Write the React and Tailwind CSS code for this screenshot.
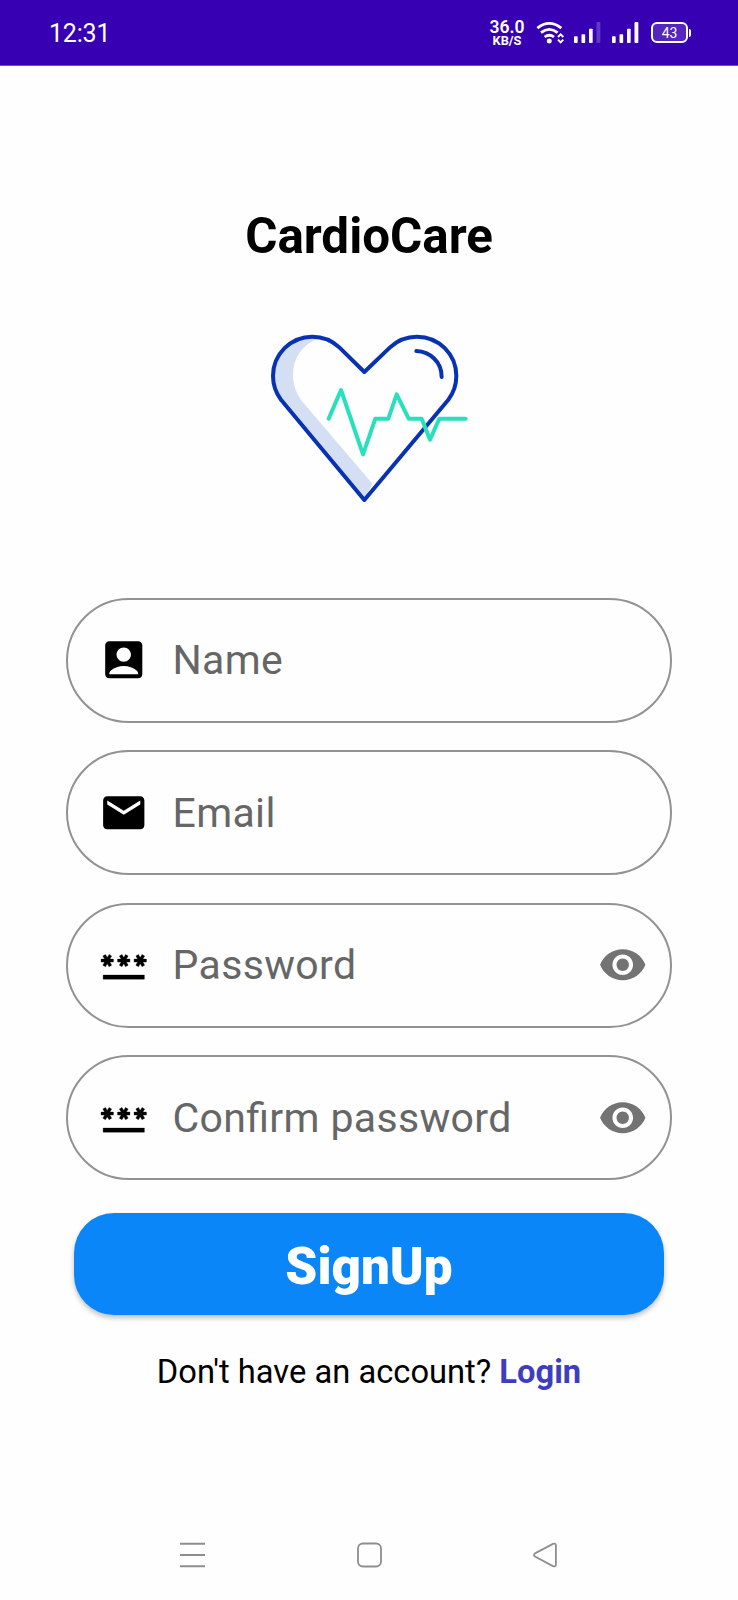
const ICONS = {
  account:
    'M19,3H5C3.89,3,3,3.9,3,5v14c0,1.1,0.89,2,2,2h14c1.1,0,2-0.9,2-2V5C21,3.9,20.11,3,19,3z M12,6c1.93,0,3.5,1.57,3.5,3.5S13.93,13,12,13s-3.5-1.57-3.5-3.5S10.07,6,12,6z M19,19H5v-0.23c0-0.62,0.28-1.2,0.76-1.58C7.47,15.82,9.64,15,12,15s4.53,0.82,6.24,2.19c0.48,0.38,0.76,0.97,0.76,1.58V19z',
  mail: 'M20 4H4c-1.1 0-1.99.9-1.99 2L2 18c0 1.1.9 2 2 2h16c1.1 0 2-.9 2-2V6c0-1.1-.9-2-2-2zm0 4l-8 5-8-5V6l8 5 8-5v2z',
  password:
    'M2,17h20v2H2V17z M3.15,12.95L4,11.47l0.85,1.48l1.3-0.75L5.3,10.72H7v-1.5H5.3l0.85-1.47L4.85,7L4,8.47L3.15,7l-1.3,0.75L2.7,9.22H1v1.5h1.7L1.85,12.2L3.15,12.95z M9.85,12.2l1.3,0.75L12,11.47l0.85,1.48l1.3-0.75l-0.85-1.48H15v-1.5h-1.7l0.85-1.47L12.85,7L12,8.47L11.15,7l-1.3,0.75l0.85,1.47H9v1.5h1.7L9.85,12.2z M23,9.22h-1.7l0.85-1.47L20.85,7L20,8.47L19.15,7l-1.3,0.75l0.85,1.47H17v1.5h1.7l-0.85,1.48l1.3,0.75L20,11.47l0.85,1.48l1.3-0.75l-0.85-1.48H23V9.22z',
  eye: 'M12 4.5C7 4.5 2.73 7.61 1 12c1.73 4.39 6 7.5 11 7.5s9.27-3.11 11-7.5c-1.73-4.39-6-7.5-11-7.5zM12 17c-2.76 0-5-2.24-5-5s2.24-5 5-5 5 2.24 5 5-2.24 5-5 5zm0-8c-1.66 0-3 1.34-3 3s1.34 3 3 3 3-1.34 3-3-1.34-3-3-3z',
};

const FIELDS = [
  { label: 'Name', icon: 'account' },
  { label: 'Email', icon: 'mail' },
  { label: 'Password', icon: 'password', reveal: true },
  { label: 'Confirm password', icon: 'password', reveal: true },
];

function Icon({ name, className }) {
  return (
    <svg viewBox="0 0 24 24" fill="currentColor" className={className}>
      <path d={ICONS[name]} stroke="currentColor" strokeWidth={name === 'password' ? 0.15 : 0} />
    </svg>
  );
}

function Wifi() {
  return (
    <svg viewBox="198 60 88 74" className="ml-[12px] mt-[20px] h-[24.7px] w-[29.3px] shrink-0" fill="none" stroke="#fff" strokeWidth="8.5">
      <path d="M202 84Q238 56 274 84" />
      <path d="M213 98Q238 78 263 98" />
      <path d="M224 111Q238 100 252 111" />
      <circle cx="238" cy="123" r="7.5" fill="#fff" stroke="none" />
      <path d="M264 111l8-8 8 8M264 119l8 8 8-8" strokeWidth="6" />
    </svg>
  );
}

function Signal({ weak, className }) {
  return (
    <svg viewBox="0 0 81 63" className={className} fill="#fff">
      <rect x="0" y="43" width="11" height="20" rx="2" />
      <rect x="22.5" y="37" width="11" height="26" rx="2" />
      <rect x="45" y="20" width="11" height="43" rx="2" />
      <rect x="67.5" y="0" width="11.5" height="63" rx="2" fillOpacity={weak ? 0.22 : 1} />
    </svg>
  );
}

function StatusBar() {
  return (
    <header className="flex h-[66px] shrink-0 items-start border-b border-[#7549cc] bg-[#3700b3] pl-[49px] text-white">
      <span className="mt-[18.5px] w-[441px] text-[25px] leading-[30px] tracking-[-0.2px]">12:31</span>
      <span className="mt-[19px] flex w-[34px] flex-col items-center">
        <span className="text-[17.5px] font-semibold leading-[17px]">36.0</span>
        <span className="text-[12.8px] font-bold leading-[9px]">KB/S</span>
      </span>
      <Wifi />
      <Signal weak className="ml-[9px] mt-[22px] h-[21px] w-[27px] shrink-0" />
      <Signal className="ml-[11px] mt-[22px] h-[21px] w-[27px] shrink-0" />
      <span className="ml-[11.5px] mt-[22px] flex items-center">
        <span className="flex h-[21px] w-[37.5px] items-center justify-center rounded-[6px] border-2 border-white bg-white/15 text-[14px] leading-none">
          43
        </span>
        <span className="ml-px h-[8px] w-[2px] rounded-r-full bg-white" />
      </span>
    </header>
  );
}

function HeartLogo() {
  return (
    <svg
      viewBox="120 429 600 513"
      className="ml-[2px] mt-[68px] h-[171px] w-[200px] shrink-0"
      fill="none"
      strokeWidth="12"
      strokeLinecap="round"
      strokeLinejoin="round"
    >
      <path
        d="M262 446C215 465 189 505 189 555C189 585 200 612 216 634L428 882L403 925L153 629A118 118 0 0 1 129 558A118 118 0 0 1 247 440Z"
        fill="#d4dff3"
      />
      <path
        d="M403 546L328 472A118 118 0 0 0 247 440A118 118 0 0 0 129 558A118 118 0 0 0 153 629L403 930L655 629A118 118 0 0 0 679 558A118 118 0 0 0 561 440A118 118 0 0 0 480 472Z"
        stroke="#0832b4"
      />
      <path d="M559 483C600 485 635 515 635 561" stroke="#0832b4" />
      <path
        d="M296 686L333 600L399 793L436 686H475L500 613L536 686H575L600 749L628 686H707"
        stroke="#28e0bc"
      />
    </svg>
  );
}

function Field({ label, icon, reveal }) {
  return (
    <div className="flex h-[125px] items-center rounded-full border-2 border-[#929292] pl-[30.5px] pr-[22.5px]">
      <Icon name={icon} className="size-[49.5px] shrink-0 text-black" />
      <span className="ml-[24.5px] flex-1 text-[41px] leading-[46px] tracking-[0.35px] text-[#666] [font-feature-settings:'liga'_1]">
        {label}
      </span>
      {reveal && <Icon name="eye" className="size-[49.5px] shrink-0 text-[#737373]" />}
    </div>
  );
}

function NavBar() {
  return (
    <nav className="mb-[32px] ml-[180px] mt-auto flex w-[377px] items-center justify-between">
      <svg viewBox="0 0 25 26" className="h-[26px] w-[25px]" stroke="#8e8e8e" strokeWidth="2">
        <path d="M0 1.7h25M0 13h25M0 24.2h25" />
      </svg>
      <svg viewBox="0 0 25 26" className="h-[26px] w-[25px]" fill="none" stroke="#8e8e8e" strokeWidth="1.8">
        <rect x="1" y="1.5" width="23" height="23" rx="5" />
      </svg>
      <svg viewBox="0 0 24 26" className="h-[26px] w-[24px]" fill="none" stroke="#8e8e8e" strokeWidth="1.8">
        <path d="M2 11.4L19.9 1.9Q22.8.8 22.9 3.4V22.6Q22.8 25.2 19.9 24.1L2 14.6Q0 13 2 11.4Z" />
      </svg>
    </nav>
  );
}

export default function App() {
  return (
    <div className="flex h-[1600px] w-[738px] flex-col overflow-hidden bg-[#fefefe] font-['Roboto',sans-serif]">
      <StatusBar />
      <main className="flex flex-col items-center">
        <h1 className="mt-[141px] text-[49.3px] font-bold leading-[58px] text-black">CardioCare</h1>
        <HeartLogo />
        <form className="mt-[93.5px] flex w-[606px] flex-col gap-[27.5px]">
          {FIELDS.map((field) => (
            <Field key={field.label} {...field} />
          ))}
        </form>
        <button className="mt-[33px] h-[102px] w-[590px] rounded-[40px] bg-[#0b86f8] pt-[6px] text-[51.2px] font-black leading-[58px] text-white shadow-[0_3px_5px_rgba(0,0,0,0.25)]">
          SignUp
        </button>
        <p className="mt-[38px] whitespace-nowrap text-[32.7px] leading-[38px] text-black">
          Don't have an account? <a className="font-bold text-[#3f3dbf]">Login</a>
        </p>
      </main>
      <NavBar />
    </div>
  );
}
